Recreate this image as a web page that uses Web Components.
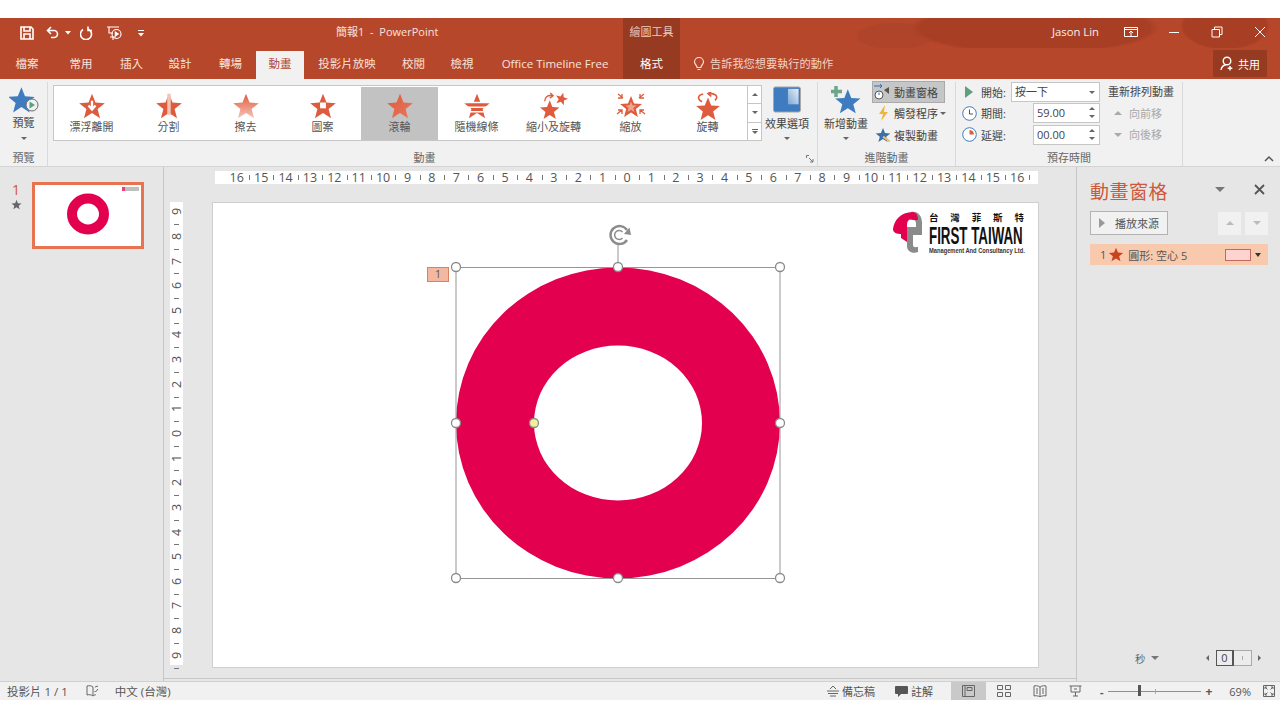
<!DOCTYPE html>
<html lang="zh-Hant">
<head>
<meta charset="utf-8">
<title>簡報1 - PowerPoint</title>
<style>
  html, body { margin: 0; padding: 0; background: #fff; }
  body {
    width: 1280px; height: 720px; overflow: hidden;
    font-family: "Open Sans", "Noto Sans CJK TC", sans-serif;
    font-size: 11px; color: #444;
    padding-top: 18px; box-sizing: border-box;
  }
</style>
</head>
<body>
<pp-titlebar></pp-titlebar>
<pp-tabs></pp-tabs>
<pp-ribbon></pp-ribbon>
<pp-workspace></pp-workspace>
<pp-status></pp-status>

<script>
const STAR = "M12 1l3 7.6 8 .5-6.200 5 2.100 7.900L12 17.600 5.100 22l2.100-7.900L1 9.100l8-.5z";

class PpTitlebar extends HTMLElement {
  connectedCallback() {
    this.attachShadow({ mode: "open" }).innerHTML = `
      <style>
        :host { display: flex; height: 30px; align-items: center; background: #b7472a; color: #f6e3dc; position: relative; font-size: 11px; }
        .qat { display: flex; align-items: center; width: 330px; padding-left: 19px; box-sizing: border-box; }
        svg { display: block; fill: none; stroke: #fff; stroke-width: 1.600; flex: none; }
        .title { width: 293px; padding: 0 0 4px 6px; box-sizing: border-box; }
        .tool { width: 57px; height: 30px; line-height: 28px; text-align: center; background: #973a22; color: #eecabd; }
        .blob { flex: 1; height: 30px; background:
          radial-gradient(ellipse 125px 26px at 355px 10px, #a83f25 92%, transparent 100%),
          radial-gradient(ellipse 45px 24px at 545px 8px, #a83f25 92%, transparent 100%),
          radial-gradient(ellipse 40px 14px at 215px 18px, #b0442a 92%, transparent 100%); }
        .user { position: absolute; left: 1052px; top: 6px; color: #fbeee9; font-size: 11.300px; }
        .wc { position: absolute; top: 8px; }
      </style>
      <div class="qat">
        <svg width="16" height="16" viewBox="0 0 16 16"><path d="M2 2h10l2 2v10H2z M5 2v4h6V2 M5 14V9h6v5"/></svg>
        <svg width="14" height="14" viewBox="0 0 14 14" style="margin-left:11px"><path d="M5 1L1.500 4.500 5 8M2 4.500h6a3.500 3.500 0 0 1 0 7H5"/></svg>
        <svg width="6" height="4" viewBox="0 0 6 4" style="margin-left:5px"><path d="M0 0h6L3 3.500z" fill="#fff" stroke="none"/></svg>
        <svg width="14" height="14" viewBox="0 0 14 14" style="margin-left:9px"><path d="M4 3a5.500 5.500 0 1 0 5 -.5M9 0v4h4" transform="translate(-1 .5)"/></svg>
        <svg width="18" height="18" viewBox="0 0 18 18" style="margin-left:12px;stroke-width:1.100"><path d="M1 3h12M3 3v6h4M4 13h6M7 13v3"/><circle cx="10.500" cy="10" r="4.500"/><path d="M9.300 8v4l3-2z" fill="#fff"/></svg>
        <svg width="8" height="8" viewBox="0 0 8 8" style="margin-left:13px;stroke-width:1"><path d="M1 1.500h6"/><path d="M1 4h6L4 7.500z" fill="#fff" stroke="none"/></svg>
      </div>
      <div class="title">簡報1 &nbsp;-&nbsp; PowerPoint</div>
      <div class="tool">繪圖工具</div>
      <div class="blob"></div>
      <span class="user">Jason Lin</span>
      <svg class="wc" style="left:1124px;stroke-width:1" width="14" height="12" viewBox="0 0 14 12"><path d="M.5 1.500h13v9H.5zM.5 3.500h13M7 10V5M5 7l2-2 2 2"/></svg>
      <svg class="wc" style="left:1168px;stroke-width:1" width="12" height="12" viewBox="0 0 12 12"><path d="M1 6.500h10"/></svg>
      <svg class="wc" style="left:1211px;stroke-width:1" width="12" height="12" viewBox="0 0 12 12"><path d="M1 3.500h7.500v7.500H1zM3.500 3.500V1H11v7.500H8.500"/></svg>
      <svg class="wc" style="left:1254px;stroke-width:1" width="12" height="12" viewBox="0 0 12 12"><path d="M1 1l10 10M11 1L1 11"/></svg>
    `;
  }
}

class PpTabs extends HTMLElement {
  connectedCallback() {
    const tabs = [["檔案", 54], ["常用", 54], ["插入", 47], ["設計", 50], ["轉場", 51], ["動畫", 48], ["投影片放映", 86], ["校閱", 47], ["檢視", 50], ["Office Timeline Free", 136], ["格式", 57]];
    this.attachShadow({ mode: "open" }).innerHTML = `
      <style>
        :host { display: flex; height: 31px; background: #b7472a; color: #f7e4dd; font-size: 11.500px; position: relative; }
        div.t { text-align: center; line-height: 31px; white-space: nowrap; flex: none; }
        .on { background: #f1f1f1; color: #b7472a; margin-top: 3px; line-height: 25px !important; }
        .fmt { background: #973a22; color: #fff; }
        .tell { margin-left: 13px; line-height: 31px; color: #f2d3c7; display: flex; align-items: center; gap: 5px; font-size: 11.200px; }
        .share { position: absolute; left: 1213px; top: 2px; width: 54px; height: 27px; background: #973a22; display: flex; align-items: center; justify-content: center; gap: 3px; color: #fff; font-size: 11px; }
        svg { fill: none; stroke: #f5dcd2; stroke-width: 1.200; }
      </style>
      ${tabs.map(([n, w]) => `<div class="t ${n === "動畫" ? "on" : ""} ${n === "格式" ? "fmt" : ""}" style="width:${w}px">${n}</div>`).join("")}
      <div class="tell">
        <svg width="12" height="14" viewBox="0 0 12 14"><path d="M4 10.500C4 8 1.500 7.500 1.500 5a4.500 4.500 0 0 1 9 0C10.500 7.500 8 8 8 10.500zM4.500 12.500h3"/></svg>
        告訴我您想要執行的動作
      </div>
      <div class="share">
        <svg width="15" height="15" viewBox="0 0 15 15" style="stroke:#fff;stroke-width:1.400"><circle cx="7" cy="5" r="3.800"/><path d="M1 14c.5-3 2.500-5 5-5.300M10 10v4.500M7.700 12.200h4.600"/></svg>
        共用
      </div>
    `;
  }
}

// one effect tile of the gallery; the star variant is picked by the kind attribute
class PpEffect extends HTMLElement {
  connectedCallback() {
    const kind = this.getAttribute("kind");
    const label = this.getAttribute("label");
    const active = this.hasAttribute("active");
    const gid = "g" + kind;
    const extras = {
      float: `<path d="M12 7v6M9 11l3 3.500 3-3.500" stroke="#fff" stroke-width="2" fill="none"/>`,
      split: `<path d="M12 1v18" stroke="#f3c3b4" stroke-width="3"/>`,
      wipe: "",
      shape: `<rect x="9.500" y="8.500" width="5" height="5" fill="#fff"/>`,
      wheel: "",
      lines: `<path d="M0 8.500h24M0 12.500h24M0 16.500h24" stroke="#fff" stroke-width="1.300"/>`
    };
    const fill = kind === "wipe" || kind === "wheel" ? `url(#${gid})` : "#df5b3d";
    let svg = `<svg width="28" height="27" viewBox="0 0 24 23"><defs><linearGradient id="${gid}" x1="0" y1="0" x2="${kind === "wheel" ? 1 : 0}" y2="1"><stop offset="0" stop-color="#df5b3d"/><stop offset="1" stop-color="${kind === "wheel" ? "#e8765c" : "#f6c4b7"}"/></linearGradient></defs><path d="${STAR}" fill="${fill}"/>${extras[kind] || ""}</svg>`;
    if (kind === "shrink") {
      svg = `<svg width="32" height="30" viewBox="0 0 32 30"><path d="${STAR}" fill="#df5b3d" transform="translate(0 8) scale(.95)"/><path d="${STAR}" fill="#df5b3d" transform="translate(17 0) rotate(15 7 7) scale(.6)"/><path d="M6 10c0-4 3-7 8-6M12 1l3 3-3.500 2.500" fill="none" stroke="#df5b3d" stroke-width="1.500"/></svg>`;
    }
    if (kind === "zoom") {
      svg = `<svg width="30" height="28" viewBox="0 0 30 28"><g transform="translate(3 3)"><path d="${STAR}" fill="#df5b3d"/><path d="${STAR}" fill="#eba692" transform="translate(6 6) scale(.5)"/></g><path d="M2 2l5 4M6 2v4H2M28 2l-5 4M24 2v4h4M1 22l5-4M2 18h4v4M29 22l-5-4M28 18h-4v4" fill="none" stroke="#df5b3d" stroke-width="1.300"/></svg>`;
    }
    if (kind === "spin") {
      svg = `<svg width="28" height="30" viewBox="0 0 24 26"><path d="${STAR}" fill="#df5b3d" transform="translate(0 4)"/><path d="M6.500 9C2 7 2 3 7.500 1.800M12 1.300c6.500-.3 10.500 2.500 6.500 6.500M15 -.5L12 1.500l3 2.500" fill="none" stroke="#df5b3d" stroke-width="1.500"/></svg>`;
    }
    this.attachShadow({ mode: "open" }).innerHTML = `
      <style>
        :host { display: flex; flex-direction: column; align-items: center; width: 77px; height: 53px; box-sizing: border-box; padding-top: 5px; color: #555; font-size: 11px; background: ${active ? "#c2c2c2" : "transparent"}; flex: none; }
        svg { display: block; height: 28px; flex: none; }
        span { line-height: 14px; white-space: nowrap; }
      </style>
      ${svg}<span>${label}</span>
    `;
  }
}

// a titled group of the ribbon, with its caption along the bottom
class PpGroup extends HTMLElement {
  connectedCallback() {
    const pad = this.getAttribute("pad") || 0;
    this.attachShadow({ mode: "open" }).innerHTML = `
      <style>
        :host { display: flex; flex-direction: column; flex: none; height: 84px; margin-top: 3px; box-sizing: border-box; border-right: 1px solid #d9d9d9; width: ${this.getAttribute("w")}px; }
        .body { flex: none; height: 68px; display: flex; }
        .cap { text-align: center; color: #666; font-size: 11px; line-height: 16px; padding-right: ${pad}px; }
      </style>
      <div class="body"><slot></slot></div>
      <div class="cap">${this.getAttribute("caption")}</div>
    `;
  }
}

class PpRibbon extends HTMLElement {
  connectedCallback() {
    this.attachShadow({ mode: "open" }).innerHTML = `
      <style>
        :host { display: flex; height: 88px; background: #f1f1f1; border-bottom: 1px solid #d4d4d4; box-sizing: border-box; position: relative; color: #444; font-size: 11px; }
        .big { display: flex; flex-direction: column; align-items: center; color: #444; line-height: 14px; flex: none; white-space: nowrap; }
        .caret { width: 0; height: 0; border: 3px solid transparent; border-top: 3px solid #666; border-bottom: 0; margin-top: 6px; }
        .gallery { display: flex; width: 695px; height: 56px; margin: 3px 0 0 5px; background: #fff; border: 1px solid #c6c6c6; box-sizing: border-box; padding: 1px 0 0 0; flex: none; }
        .gallery pp-effect:first-child { margin-left: -1px; }
        .scroll { display: flex; flex-direction: column; width: 14px; height: 56px; margin-top: 3px; flex: none; box-sizing: border-box; border: 1px solid #c6c6c6; border-left: 0; background: #fff; }
        .scroll i { flex: 1; border-bottom: 1px solid #c6c6c6; display: flex; flex-direction: column; gap: 1px; align-items: center; justify-content: center; }
        .scroll i:last-child { border-bottom: 0; }
        .scroll s { width: 6px; height: 1px; background: #666; }
        .up { width: 0; height: 0; border: 3px solid transparent; border-bottom: 3px solid #666; border-top: 0; }
        .dn { width: 0; height: 0; border: 3px solid transparent; border-top: 3px solid #666; border-bottom: 0; }
        .adv { display: flex; flex-direction: column; width: 74px; margin: -1px 0 0 -2px; }
        .adv div { display: flex; align-items: center; height: 21.500px; white-space: nowrap; gap: 3px; box-sizing: border-box; flex: none; }
        .adv .sel { background: #c6c6c6; border: 1px solid #aaa; width: 73px; }
        .timing { display: grid; grid-template-columns: 16px 31px 76px; grid-auto-rows: 21.500px; align-items: center; padding: 0 0 0 7px; margin-top: -1px; column-gap: 2px; align-content: start; }
        .input { height: 20px; background: #fff; border: 1px solid #c6c6c6; box-sizing: border-box; font-size: 11px; line-height: 18px; padding-left: 3px; position: relative; color: #444; }
        .input b { position: absolute; right: 4px; top: 3px; display: flex; flex-direction: column; gap: 5px; }
        .order { display: flex; flex-direction: column; margin: -1px 0 0 18px; width: 70px; line-height: 21.500px; }
        .order span { color: #a8a8a8; display: flex; align-items: center; gap: 7px; padding-left: 6px; }
        .order .head { color: #444; padding: 0; display: block; white-space: nowrap; }
        .cu { width: 0; height: 0; border: 4px solid transparent; border-bottom: 4px solid #aaa; border-top: 0; }
        .cd { width: 0; height: 0; border: 4px solid transparent; border-top: 4px solid #aaa; border-bottom: 0; }
        .collapse { position: absolute; left: 1264px; top: 76px; }
        .launch { position: absolute; left: 806px; top: 76px; }
      </style>
      <pp-group w="48" caption="預覽">
        <div class="big" style="width:47px;padding-top:5px">
          <svg width="30" height="27" viewBox="0 0 30 27"><path d="${STAR}" fill="#3f7cbf" transform="translate(-2 -1) scale(1.200)"/><circle cx="23" cy="18" r="6" fill="#f1f1f1" stroke="#6c6c6c"/><path d="M20.500 14.500v7l5.500-3.500z" fill="#5ba180"/></svg>
          <span style="margin-top:2px">預覽</span><i class="caret" style="margin-top:7px"></i>
        </div>
      </pp-group>
      <pp-group w="770" caption="動畫" pad="16">
        <div class="gallery">
          <pp-effect kind="float" label="漂浮離開"></pp-effect>
          <pp-effect kind="split" label="分割"></pp-effect>
          <pp-effect kind="wipe" label="擦去"></pp-effect>
          <pp-effect kind="shape" label="圖案"></pp-effect>
          <pp-effect kind="wheel" label="滾輪" active></pp-effect>
          <pp-effect kind="lines" label="隨機線條"></pp-effect>
          <pp-effect kind="shrink" label="縮小及旋轉"></pp-effect>
          <pp-effect kind="zoom" label="縮放"></pp-effect>
          <pp-effect kind="spin" label="旋轉"></pp-effect>
        </div>
        <div class="scroll"><i><u class="up"></u></i><i><u class="dn"></u></i><i><s></s><u class="dn"></u></i></div>
        <div class="big" style="width:52px;padding-top:4px;margin-left:-1px">
          <svg width="30" height="27" viewBox="0 0 30 28"><defs><linearGradient id="fold" x1="0" y1="1" x2="1" y2="0"><stop offset="0" stop-color="#7ea6d2"/><stop offset="1" stop-color="#e6eef6"/></linearGradient></defs><rect x="1" y="1" width="28" height="26" rx="2" fill="#3f7cbf" stroke="#a8a8a8"/><path d="M16 3h11v16H16z" fill="url(#fold)"/></svg>
          <span style="margin-top:4px">效果選項</span><i class="caret"></i>
        </div>
      </pp-group>
      <pp-group w="138" caption="進階動畫">
        <div class="big" style="width:56px;padding-top:4px">
          <svg width="34" height="28" viewBox="0 0 34 28"><path d="${STAR}" fill="#3f7cbf" transform="translate(5 2) scale(1.150)"/><path d="M7 0v11M2 5.500h11" stroke="#6fa58a" stroke-width="3.500"/></svg>
          <span style="margin-top:3px">新增動畫</span><i class="caret"></i>
        </div>
        <div class="adv">
          <div class="sel"><svg width="18" height="18" viewBox="0 0 18 18"><circle cx="6" cy="12" r="4" fill="#fff" stroke="#555"/><path d="M6 12V9.500M1 3h8M7 1l2 2-2 2" stroke="#2f6fb4" fill="none"/><path d="M11 7l5-3v7z" fill="#555"/></svg>動畫窗格</div>
          <div style="padding-left:5px"><svg width="14" height="16" viewBox="0 0 14 16"><path d="M8 0L2 9h4l-2 7 7-9H7z" fill="#f0b63c"/></svg><span>觸發程序</span><u class="dn" style="margin-left:-1px"></u></div>
          <div style="padding-left:3px"><svg width="16" height="16" viewBox="0 0 24 23"><path d="${STAR}" fill="#3b6fa8"/><path d="M12 14l10 7" stroke="#e9c06c" stroke-width="3"/></svg><span>複製動畫</span></div>
        </div>
      </pp-group>
      <pp-group w="227" caption="預存時間">
        <div class="timing">
          <svg width="12" height="14" viewBox="0 0 12 14"><path d="M2 1v12l8-6z" fill="#5ba180"/></svg><span>開始:</span>
          <div class="input" style="margin-left:-3px;width:89px">按一下<b style="top:8px;gap:0"><u class="dn"></u></b></div>
          <svg width="15" height="15" viewBox="0 0 15 15" style="margin-left:-1px"><circle cx="7.500" cy="7.500" r="6.800" fill="#fff" stroke="#3f7cbf"/><path d="M7.500 3.500v4.500h3.500" fill="none" stroke="#555"/></svg><span>期間:</span>
          <div class="input" style="margin-left:19px;width:67px">59.00<b><u class="up"></u><u class="dn"></u></b></div>
          <svg width="15" height="15" viewBox="0 0 15 15" style="margin-left:-1px"><circle cx="7.500" cy="7.500" r="6.800" fill="#fff" stroke="#3f7cbf"/><path d="M7.500 7.500V3a4.500 4.500 0 0 1 4.500 4.500z" fill="#d9603f"/></svg><span>延遲:</span>
          <div class="input" style="margin-left:19px;width:67px">00.00<b><u class="up"></u><u class="dn"></u></b></div>
        </div>
        <div class="order">
          <span class="head">重新排列動畫</span>
          <span><u class="cu"></u>向前移</span>
          <span><u class="cd"></u>向後移</span>
        </div>
      </pp-group>
      <svg class="launch" width="8" height="8" viewBox="0 0 8 8"><path d="M.5 3V.5H3M3 3l4 4M7 4v3H4" fill="none" stroke="#777"/></svg>
      <svg class="collapse" width="10" height="7" viewBox="0 0 10 7"><path d="M1 6l4-4 4 4" fill="none" stroke="#555" stroke-width="1.500"/></svg>
    `;
  }
}

class PpRuler extends HTMLElement {
  connectedCallback() {
    const max = Number(this.getAttribute("max"));
    const unit = this.getAttribute("unit");
    const nums = [];
    for (let i = max; i >= -max; i--) nums.push(Math.abs(i));
    const cell = n => `<span class="c"><em>${n}</em><i></i></span>`;
    this.attachShadow({ mode: "open" }).innerHTML = `
      <style>
        :host { display: flex; flex: none; background: #fff; color: #555; font-size: 12.500px; justify-content: center; align-items: center; }
        .c { flex: none; position: relative; display: flex; align-items: center; justify-content: center; width: ${unit}px; height: ${unit}px; }
        .c em { font-style: normal; line-height: 13px; }
        .c i { position: absolute; background: #777; }
        :host(:not([vertical])) { padding-left: 1px; box-sizing: border-box; }
        :host(:not([vertical])) .c { height: 13px; }
        :host(:not([vertical])) .c i { right: -1px; top: 4px; width: 1px; height: 5px; }
        :host([vertical]) { flex-direction: column; }
        :host([vertical]) .c { width: 13px; }
        :host([vertical]) .c em { transform: rotate(-90deg); }
        :host([vertical]) .c i { bottom: -1px; left: 4px; width: 5px; height: 1px; }
      </style>
      ${nums.map(cell).join("")}
    `;
  }
}

class PpThumbs extends HTMLElement {
  connectedCallback() {
    this.attachShadow({ mode: "open" }).innerHTML = `
      <style>
        :host { display: flex; flex: none; width: 164px; box-sizing: border-box; border-right: 1px solid #c6c6c6; padding: 15px 0 0 0; background: #e6e6e6; }
        .n { width: 32px; display: flex; flex-direction: column; align-items: center; color: #d0583a; font-size: 14px; line-height: 15px; }
        .thumb { position: relative; width: 112px; height: 67px; box-sizing: border-box; background: #fff; border: 3px solid #e87350; }
        .logo { position: absolute; right: 2px; top: 2px; width: 17px; height: 4px; background: linear-gradient(90deg, #e3004f 0 3px, #aaa 3px); opacity: .75; }
        svg.d { position: absolute; left: 31px; top: 8px; }
      </style>
      <div class="n"><span>1</span><svg width="11" height="11" viewBox="0 0 24 23" style="margin-top:2px"><path d="${STAR}" fill="#666"/></svg></div>
      <div class="thumb"><div class="logo"></div><svg class="d" width="44" height="42" viewBox="0 0 44 42"><ellipse cx="22" cy="21" rx="16" ry="15.500" fill="none" stroke="#e3004f" stroke-width="10"/></svg></div>
    `;
  }
}

// the slide is a free canvas: the shape, the handles and the logo sit where they were dropped
class PpSlide extends HTMLElement {
  connectedCallback() {
    const handle = (x, y, fill = "#fff") => `<circle cx="${x}" cy="${y}" r="4.500" fill="${fill}" stroke="#8a8a8a" stroke-width="1.300"/>`;
    this.attachShadow({ mode: "open" }).innerHTML = `
      <style>
        :host { display: block; position: relative; flex: none; width: 827px; height: 466px; background: #fff; box-sizing: border-box; border: 1px solid #cfcfcf; }
        svg.c { position: absolute; left: 0; top: 0; overflow: visible; }
        .tag { position: absolute; left: 214px; top: 64px; width: 22px; height: 15px; background: #f4b8a0; border: 1px solid #d9825f; box-sizing: border-box; text-align: center; color: #555; font-size: 10.500px; line-height: 13px; }
        .logo { position: absolute; left: 679px; top: 8px; width: 135px; height: 44px; }
        .cn { position: absolute; left: 37px; top: 0; width: 95px; display: flex; justify-content: space-between; font: 700 9.500px/13px "Noto Sans CJK TC", sans-serif; color: #111; }
        .en { position: absolute; left: 37px; top: 15px; font: 700 24px/20px "Liberation Sans", sans-serif; color: #111; white-space: nowrap; transform: scaleX(.555); transform-origin: left center; }
        .sub { position: absolute; left: 37px; top: 35px; font: 700 7px/9px "Liberation Sans", sans-serif; color: #333; white-space: nowrap; transform: scaleX(.82); transform-origin: left center; }
      </style>
      <svg class="c" width="825" height="464" viewBox="213 203 825 464">
        <path fill-rule="evenodd" fill="#e3004f" d="M456 423a162 155.500 0 1 0 324 0a162 155.500 0 1 0 -324 0zM534 423a84 77.500 0 1 1 168 0a84 77.500 0 1 1 -168 0z"/>
        <rect x="456" y="267.500" width="324" height="311" fill="none" stroke="#969696" stroke-width="1"/>
        <path d="M618 267v-22" stroke="#969696" stroke-width="1"/>
        <path d="M627 240a9 9 0 1 1 0-10" fill="none" stroke="#8c8c8c" stroke-width="2.400"/>
        <path d="M624 234l7 1-1.500-7.500z" fill="#8c8c8c"/>
        <path d="M622.500 232a4.500 4.500 0 1 0 0 6" fill="none" stroke="#8c8c8c" stroke-width="1.500"/>
        ${handle(456, 267)}${handle(618, 267)}${handle(780, 267)}
        ${handle(456, 423)}${handle(780, 423)}
        ${handle(456, 578)}${handle(618, 578)}${handle(780, 578)}
        ${handle(534, 423, "#eef09a")}
      </svg>
      <div class="tag">1</div>
      <div class="logo">
        <svg width="34" height="44" viewBox="0 0 34 44" style="position:absolute;left:0;top:0">
          <path d="M19 1C26 0 30 5 30 12V24H15V16H24V12C24 9 21 8 18 9z" fill="#8b8b8b"/>
          <path d="M15 24H21V34C21 37 24 36 26 36V41C21 43 15 41 15 35z" fill="#8b8b8b"/>
          <path d="M1 18C2 10 8 1 21 1C25 2 26 5 26 9H21C18 7 15 9 15 14V31L9 27V23C5 23 1 22 1 18z" fill="#e3004f"/>
        </svg>
        <div class="cn"><span>台</span><span>灣</span><span>菲</span><span>斯</span><span>特</span></div>
        <div class="en">FIRST TAIWAN</div>
        <div class="sub">Management And Consultancy Ltd.</div>
      </div>
    `;
  }
}

class PpPane extends HTMLElement {
  connectedCallback() {
    this.attachShadow({ mode: "open" }).innerHTML = `
      <style>
        :host { display: flex; flex-direction: column; flex: none; width: 204px; box-sizing: border-box; border-left: 1px solid #c6c6c6; background: #e6e6e6; padding: 12px 12px 0 13px; color: #555; position: relative; height: 100%; }
        .h { display: flex; align-items: center; justify-content: space-between; height: 26px; }
        .h b { font-weight: 400; font-size: 19px; color: #d0583a; line-height: 26px; letter-spacing: .5px; }
        .tools { display: flex; gap: 29px; align-items: center; padding-right: 3px; margin-top: -6px; }
        .row { display: flex; margin-top: 6px; align-items: center; justify-content: space-between; }
        .play { width: 78px; height: 24px; background: #f1f1f1; border: 1px solid #b3b3b3; box-sizing: border-box; display: flex; align-items: center; font-size: 11px; padding-left: 8px; gap: 10px; }
        .tri { width: 0; height: 0; border: 5px solid transparent; border-left: 6px solid #999; border-right: 0; }
        .arrows { display: flex; gap: 4px; }
        .arrows i { width: 23px; height: 23px; background: #f1f1f1; display: flex; align-items: center; justify-content: center; }
        .cu { width: 0; height: 0; border: 4px solid transparent; border-bottom: 4px solid #bbb; border-top: 0; }
        .cd { width: 0; height: 0; border: 4px solid transparent; border-top: 4px solid #bbb; border-bottom: 0; }
        .item { display: flex; align-items: center; height: 21px; margin-top: 9px; background: #f9c9ae; padding-left: 10px; font-size: 11px; gap: 2px; }
        .bar { width: 26px; height: 12px; background: #ffd3cf; border: 1px solid #c06a5e; box-sizing: border-box; margin-left: auto; }
        .dn { width: 0; height: 0; border: 3.500px solid transparent; border-top: 4px solid #333; border-bottom: 0; margin: 0 7.500px 0 1.500px; }
        .foot { position: absolute; left: 0; right: 0; bottom: 15px; display: flex; align-items: center; color: #666; font-size: 10.500px; padding-left: 58px; }
        .foot .s { width: 0; height: 0; border: 4px solid transparent; border-top: 4px solid #777; border-bottom: 0; margin-left: 5px; }
        .foot .l { width: 0; height: 0; border: 3.500px solid transparent; border-right: 3.500px solid #666; border-left: 0; margin-left: 47px; }
        .foot .r { width: 0; height: 0; border: 3.500px solid transparent; border-left: 3.500px solid #666; border-right: 0; margin-left: 6px; }
        .scale { display: flex; width: 36px; height: 16px; margin-left: 7.500px; border: 1px solid #aaa; box-sizing: border-box; background: #ececec; align-items: center; }
        .scale b { width: 15px; height: 14px; border-right: 1px solid #555; outline: 1px solid #555; font-weight: 400; text-align: center; line-height: 14px; font-size: 11px; color: #444; }
        .scale s { width: 1px; height: 4px; background: #aaa; margin-left: 9px; }
      </style>
      <div class="h"><b>動畫窗格</b>
        <div class="tools">
          <i class="dn" style="border-width:5px;border-top-color:#777;border-bottom:0;margin:0"></i>
          <svg width="11" height="11" viewBox="0 0 11 11"><path d="M1 1l9 9M10 1l-9 9" stroke="#555" stroke-width="1.800"/></svg>
        </div>
      </div>
      <div class="row">
        <div class="play"><i class="tri"></i>播放來源</div>
        <div class="arrows"><i><u class="cu"></u></i><i><u class="cd"></u></i></div>
      </div>
      <div class="item">1
        <svg width="16" height="15" viewBox="0 0 24 23"><path d="${STAR}" fill="#c8441f"/></svg>
        <span style="margin-left:2px">圓形: 空心 5</span>
        <i class="bar"></i><i class="dn"></i>
      </div>
      <div class="foot">秒<i class="s"></i><i class="l"></i><div class="scale"><b>0</b><s></s></div><i class="r"></i></div>
    `;
  }
}

class PpWorkspace extends HTMLElement {
  connectedCallback() {
    this.attachShadow({ mode: "open" }).innerHTML = `
      <style>
        :host { display: flex; height: 514px; background: #e6e6e6; box-sizing: border-box; }
        .main { flex: 1; display: grid; grid-template-columns: 13px auto; grid-template-rows: 13px auto; column-gap: 29px; row-gap: 18px; padding: 4px 0 0 6px; align-content: start; border-bottom: 1px solid #c6c6c6; margin-bottom: 2px; }
        .corner { grid-column: 1; grid-row: 1; }
        .hr { grid-column: 2; grid-row: 1; width: 823px; margin-left: 3px; }
        .vr { grid-column: 1; grid-row: 2; height: 463px; }
      </style>
      <pp-thumbs></pp-thumbs>
      <div class="main">
        <div class="corner"></div>
        <pp-ruler class="hr" max="16" unit="24.400"></pp-ruler>
        <pp-ruler class="vr" vertical max="9" unit="24.650"></pp-ruler>
        <pp-slide></pp-slide>
      </div>
      <pp-pane></pp-pane>
    `;
  }
}

class PpStatus extends HTMLElement {
  connectedCallback() {
    this.attachShadow({ mode: "open" }).innerHTML = `
      <style>
        :host { display: flex; align-items: center; height: 19px; background: #f1f1f1; color: #555; font-size: 11px; border-top: 1px solid #d0d0d0; box-sizing: border-box; }
        .l { display: flex; align-items: center; padding-left: 7px; font-size: 11.500px; }
        .r { margin-left: auto; display: flex; align-items: center; height: 18px; }
        .v { width: 35.500px; height: 18px; display: flex; align-items: center; justify-content: center; }
        .v.on { background: #c9c9c9; }
        svg { display: block; fill: none; stroke: #666; }
        .tool { display: flex; align-items: center; gap: 3px; }
        .slider { position: relative; width: 93px; height: 1px; background: #8f8f8f; margin: 0 4px 0 5px; }
        .slider b { position: absolute; left: 30px; top: -6px; width: 3px; height: 11px; background: #555; }
        .slider i { position: absolute; left: 47px; top: -2px; width: 1px; height: 5px; background: #aaa; }
      </style>
      <div class="l">
        <span>投影片 1 / 1</span>
        <svg style="margin-left:18px" width="14" height="14" viewBox="0 0 14 14"><path d="M7 3C5.500 1.500 3 1.500 1 2v9c2-.5 4.500-.5 6 1M7 3v9M7 12c1-1 2-1.200 3-1.200M9 3l3-1M12 5L9.500 8 8.500 7"/></svg>
        <span style="margin-left:15px">中文 (台灣)</span>
      </div>
      <div class="r">
        <div class="tool"><svg width="12" height="12" viewBox="0 0 12 12"><path d="M3 4l3-3 3 3M0 6h12M1 8.500h10M3 11h6"/></svg><span>備忘稿</span></div>
        <div class="tool" style="margin-left:20px"><svg width="13" height="13" viewBox="0 0 13 13"><path d="M1 1h11a1 1 0 0 1 1 1v6a1 1 0 0 1-1 1H6l-3 3V9H1a1 1 0 0 1-1-1V2a1 1 0 0 1 1-1z" fill="#555" stroke="none"/></svg><span>註解</span></div>
        <div class="v on" style="margin-left:18px"><svg width="13" height="12" viewBox="0 0 13 12"><path d="M.5.500h12v11H.5zM3 .500v11M5 2.500h5v3H5z"/></svg></div>
        <div class="v"><svg width="14" height="12" viewBox="0 0 14 12"><path d="M.5.500h5v4h-5zM8.500.500h5v4h-5zM.5 7.500h5v4h-5zM8.500 7.500h5v4h-5z"/></svg></div>
        <div class="v"><svg width="14" height="12" viewBox="0 0 14 12"><path d="M7 2C5 .5 2 .5 1 1v10c1-.5 4-.5 6 1 2-1.500 5-1.500 6-1V1c-1-.5-4-.5-6 1zM7 2v10M3 4h2M3 6h2M3 8h2M9 4h2M9 6h2M9 8h2"/></svg></div>
        <div class="v"><svg width="13" height="12" viewBox="0 0 13 12"><path d="M.5 1h12M2 1v6h9V1M6.500 7v4M4 11h5M5 4h3"/></svg></div>
        <span style="margin-left:7px;font-weight:700">-</span>
        <div class="slider"><b></b><i></i></div>
        <span style="font-weight:700;font-size:12px">+</span>
        <span style="margin-left:17px">69%</span>
        <svg style="margin:0 5px 0 12px" width="12" height="12" viewBox="0 0 12 12"><path d="M.5.500h11v11H.5zM2 2l2.500 2.500M2 2v2M2 2h2M10 2L7.500 4.500M10 2v2M10 2H8M2 10l2.500-2.500M2 10V8M2 10h2M10 10L7.500 7.500M10 10V8M10 10H8"/></svg>
      </div>
    `;
  }
}

customElements.define("pp-titlebar", PpTitlebar);
customElements.define("pp-tabs", PpTabs);
customElements.define("pp-effect", PpEffect);
customElements.define("pp-group", PpGroup);
customElements.define("pp-ribbon", PpRibbon);
customElements.define("pp-ruler", PpRuler);
customElements.define("pp-thumbs", PpThumbs);
customElements.define("pp-slide", PpSlide);
customElements.define("pp-pane", PpPane);
customElements.define("pp-workspace", PpWorkspace);
customElements.define("pp-status", PpStatus);
</script>
</body>
</html>
